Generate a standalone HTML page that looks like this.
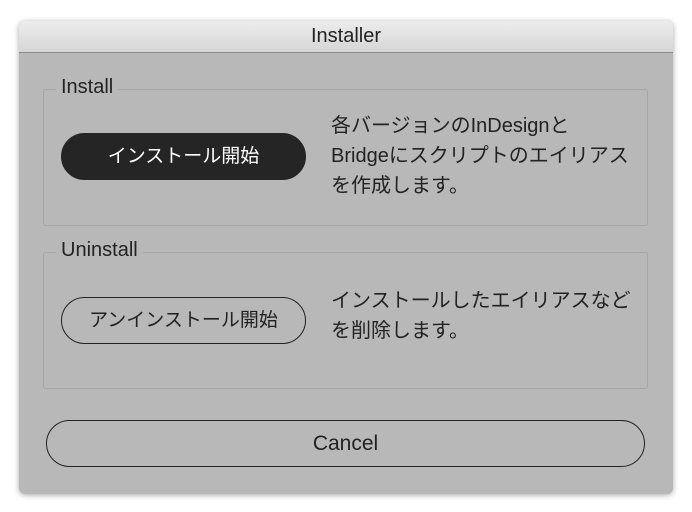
<!DOCTYPE html>
<html><head><meta charset="utf-8"><style>
body{margin:0;width:692px;height:512px;background:#fff;position:relative;overflow:hidden;font-family:"Liberation Sans","Noto Sans CJK JP",sans-serif;color:#222}
.win{position:absolute;left:19px;top:21px;width:654px;height:473px;background:#b8b8b8;border-radius:6px;box-shadow:0 1px 6px rgba(0,0,0,.35);overflow:hidden}
.title{height:31px;background:linear-gradient(#ececec,#d6d6d6);border-bottom:1px solid #8a8a8a;text-align:center;font-size:20px;line-height:31px;color:#222}
.box{position:absolute;left:24px;width:603px;height:135px;border:1px solid #a6a6a6;border-radius:3px}
.leg{position:absolute;left:12px;top:-14px;background:#b8b8b8;padding:0 5px;font-size:20px;color:#222}
.btn{position:absolute;left:42px;width:243px;height:45px;border-radius:24px;font-size:19px;text-align:center;line-height:45px}
.txt{position:absolute;left:312px;font-size:20px;line-height:30px;color:#222}
</style></head><body>
<div class="win">
<div class="title">Installer</div>
<div class="box" style="top:68px"><span class="leg">Install</span></div>
<div class="box" style="top:231px"><span class="leg">Uninstall</span></div>
<div class="btn" style="top:112px;background:#252525;color:#fff;border:1px solid #252525">インストール開始</div>
<div class="txt" style="top:90px">各バージョンのInDesignと<br>Bridgeにスクリプトのエイリアス<br>を作成します。</div>
<div class="btn" style="top:276px;border:1.5px solid #222;color:#222">アンインストール開始</div>
<div class="txt" style="top:265px">インストールしたエイリアスなど<br>を削除します。</div>
<div class="btn" style="left:27px;width:597px;top:399px;border:1.5px solid #222;font-size:21px">Cancel</div>
</div>
</body></html>
